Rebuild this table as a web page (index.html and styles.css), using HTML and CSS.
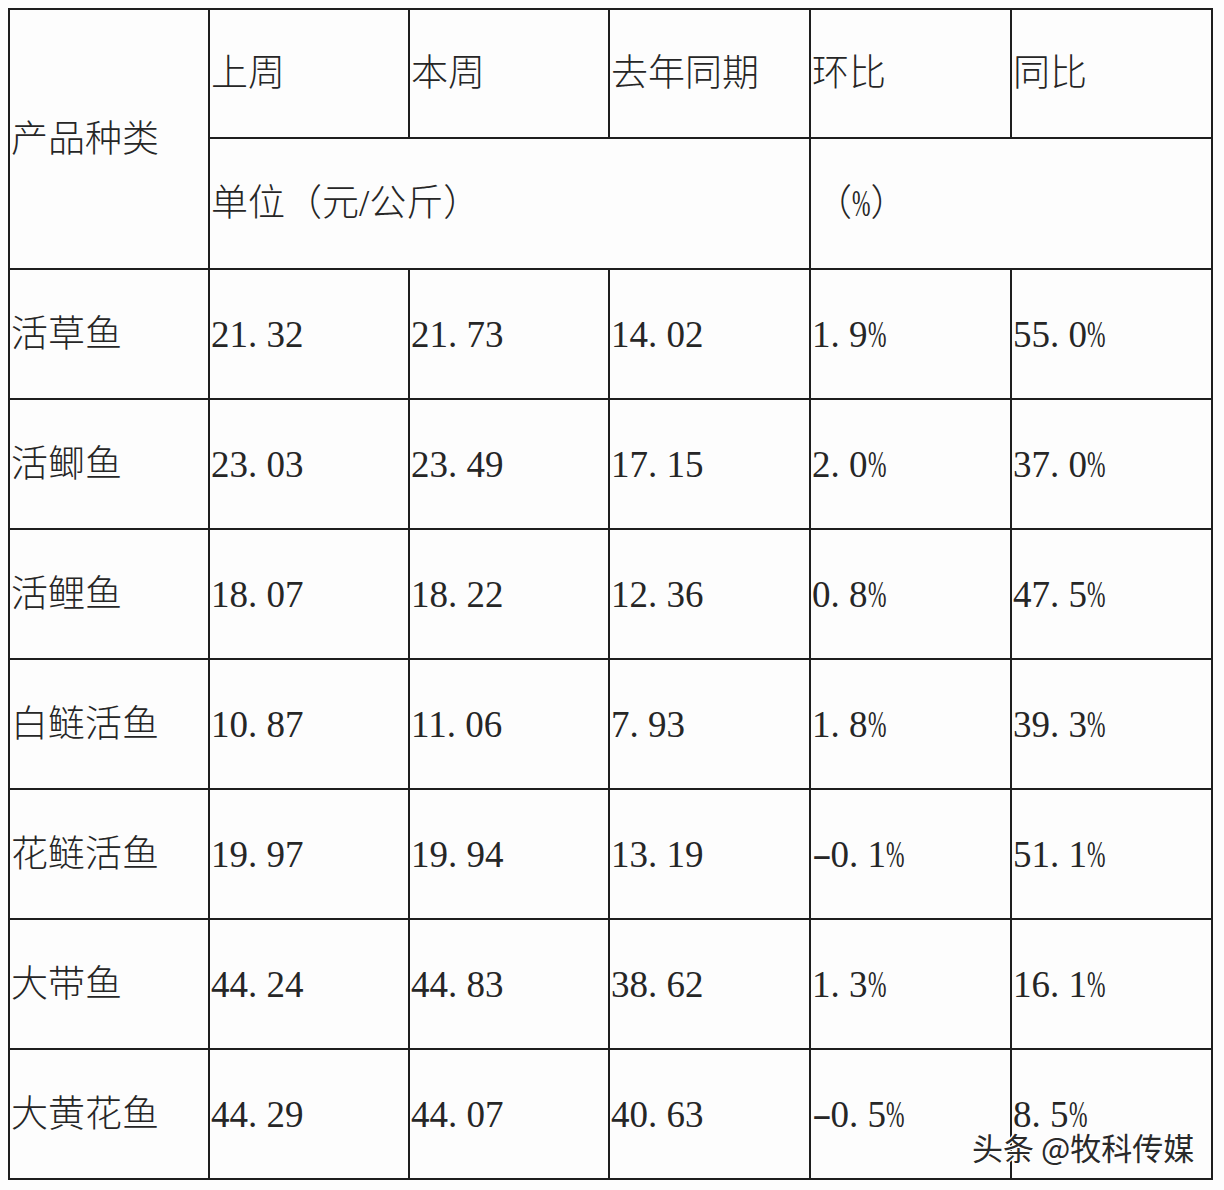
FILE: index.html
```html
<!DOCTYPE html>
<html lang="zh">
<head>
<meta charset="utf-8">
<link rel="stylesheet" href="styles.css">
</head>
<body>
<div class="sheet">
<table class="price">
  <colgroup>
    <col class="c1"><col class="c2"><col class="c3"><col class="c4"><col class="c5"><col class="c6">
  </colgroup>
  <tr class="h1">
    <td rowspan="2">产品种类</td>
    <td>上周</td>
    <td>本周</td>
    <td>去年同期</td>
    <td>环比</td>
    <td>同比</td>
  </tr>
  <tr class="h2">
    <td colspan="3">单位（元/公斤）</td>
    <td colspan="2" class="pc">（<span class="pct">%</span>）</td>
  </tr>
  <tr><td>活草鱼</td><td>21<span class="pt">.</span>32</td><td>21<span class="pt">.</span>73</td><td>14<span class="pt">.</span>02</td><td>1<span class="pt">.</span>9<span class="pct">%</span></td><td>55<span class="pt">.</span>0<span class="pct">%</span></td></tr>
  <tr><td>活鲫鱼</td><td>23<span class="pt">.</span>03</td><td>23<span class="pt">.</span>49</td><td>17<span class="pt">.</span>15</td><td>2<span class="pt">.</span>0<span class="pct">%</span></td><td>37<span class="pt">.</span>0<span class="pct">%</span></td></tr>
  <tr><td>活鲤鱼</td><td>18<span class="pt">.</span>07</td><td>18<span class="pt">.</span>22</td><td>12<span class="pt">.</span>36</td><td>0<span class="pt">.</span>8<span class="pct">%</span></td><td>47<span class="pt">.</span>5<span class="pct">%</span></td></tr>
  <tr><td>白鲢活鱼</td><td>10<span class="pt">.</span>87</td><td>11<span class="pt">.</span>06</td><td>7<span class="pt">.</span>93</td><td>1<span class="pt">.</span>8<span class="pct">%</span></td><td>39<span class="pt">.</span>3<span class="pct">%</span></td></tr>
  <tr><td>花鲢活鱼</td><td>19<span class="pt">.</span>97</td><td>19<span class="pt">.</span>94</td><td>13<span class="pt">.</span>19</td><td><span class="neg">-</span>0<span class="pt">.</span>1<span class="pct">%</span></td><td>51<span class="pt">.</span>1<span class="pct">%</span></td></tr>
  <tr><td>大带鱼</td><td>44<span class="pt">.</span>24</td><td>44<span class="pt">.</span>83</td><td>38<span class="pt">.</span>62</td><td>1<span class="pt">.</span>3<span class="pct">%</span></td><td>16<span class="pt">.</span>1<span class="pct">%</span></td></tr>
  <tr><td>大黄花鱼</td><td>44<span class="pt">.</span>29</td><td>44<span class="pt">.</span>07</td><td>40<span class="pt">.</span>63</td><td><span class="neg">-</span>0<span class="pt">.</span>5<span class="pct">%</span></td><td>8<span class="pt">.</span>5<span class="pct">%</span></td></tr>
</table>
<div class="mark">头条 @牧科传媒</div>
</div>
</body>
</html>
```

FILE: styles.css
```css
html, body {
  background: #fdfdfd;
}
body {
  margin: 8px;
}
.sheet {
  position: relative;
  width: 1204px;
}
.price {
  border-collapse: collapse;
  table-layout: fixed;
  width: 1203px;
  font-family: "Liberation Serif", "Noto Sans CJK SC", serif;
  font-weight: 300;
  font-size: 37px;
  color: #262626;
}
.c1, .c2, .c3 { width: 200px; }
.c4 { width: 201px; }
.c5, .c6 { width: 201px; }
.price td {
  border: 2px solid #1e1e1e;
  padding: 0 0 0 1px;
  height: 128px;
  vertical-align: middle;
  white-space: nowrap;
  line-height: 1;
}
.price tr.h1 td { height: 127px; }
.price tr.h2 td { height: 129px; }
.price td.pc { padding-left: 4px; }
.pt {
  display: inline-block;
  width: 0.5em;
}
.neg {
  display: inline-block;
  width: 0.5em;
  transform: scaleX(1.6);
  transform-origin: left center;
}
.pct {
  display: inline-block;
  width: 0.5em;
  transform: scaleX(0.6);
  transform-origin: left center;
}
.mark {
  position: absolute;
  left: 964px;
  top: 1116px;
  font-family: "Noto Sans CJK SC", sans-serif;
  font-size: 31px;
  color: #2a2a2a;
  text-shadow: 1px 1px 0 #fff, -1px -1px 0 #fff, 1px -1px 0 #fff, -1px 1px 0 #fff;
  white-space: nowrap;
}
```
